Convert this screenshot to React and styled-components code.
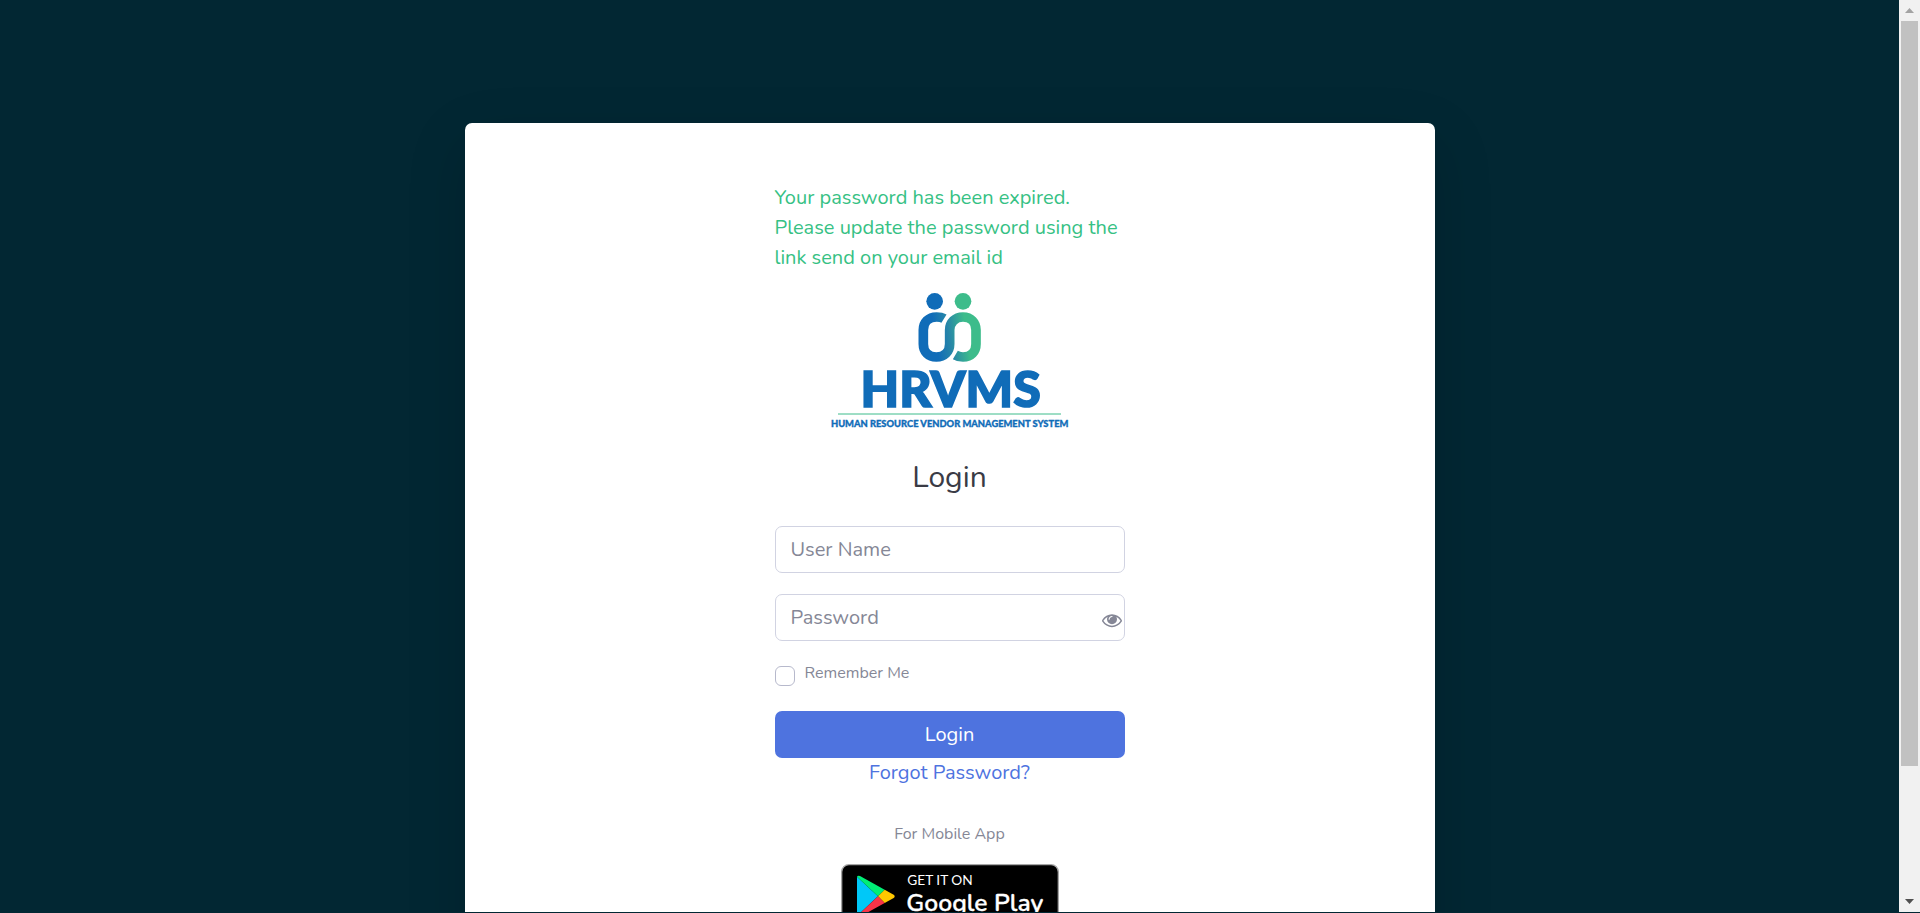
import React, { useState } from "react";
import styled, { createGlobalStyle } from "styled-components";

const GlobalStyle = createGlobalStyle`
  *, *::before, *::after { box-sizing: border-box; }
  body {
    margin: 0;
    background: #022733;
    color: #858796;
    font-family: Nunito, Lato, "Liberation Sans", sans-serif;
    font-size: 20px;
    line-height: 30px;
  }
`;

const Screen = styled.div`
  display: flex;
  height: 100vh;
  padding-bottom: 1px;
  overflow: hidden;
  background: #022733;
`;

const Page = styled.main`
  flex: 1;
  min-width: 0;
  padding: 123px 20px 0;
  overflow: hidden;
`;

const Card = styled.section`
  max-width: 970px;
  margin: 0 auto;
  padding: 60px 20px;
  border-radius: 7px;
  background: #fff;
  box-shadow: 0 20px 60px rgba(0, 0, 0, 0.15);
`;

const Form = styled.form`
  display: flex;
  flex-direction: column;
  max-width: 350px;
  margin: 0 auto;
`;

const Notice = styled.p`
  margin: 0 0 17px;
  color: #36c184;
`;

const Logo = styled.svg`
  align-self: center;
  width: 236px;
  height: 140px;
  overflow: visible;
`;

const Title = styled.h1`
  margin: 28px 0;
  color: #3a3b45;
  font-size: 30px;
  font-weight: 400;
  line-height: 40px;
  text-align: center;
`;

const Field = styled.div`
  position: relative;
  margin-bottom: 21px;
`;

const TextInput = styled.input`
  display: block;
  width: 100%;
  height: 47px;
  padding: 0 15px;
  border: 1px solid #d1d3e2;
  border-radius: 7px;
  outline: 0;
  background: #fff;
  color: #6e707e;
  font: inherit;
  &::placeholder { color: #858796; opacity: 1; }
`;

const RevealButton = styled.button`
  position: absolute;
  top: 16px;
  right: 3px;
  display: flex;
  padding: 0;
  border: 0;
  background: none;
  color: #858796;
  cursor: pointer;
`;

const Remember = styled.label`
  display: flex;
  align-items: flex-end;
  gap: 10px;
  height: 24px;
  margin-bottom: 25px;
  font-size: 16px;
  line-height: 26px;
`;

const Checkbox = styled.input`
  flex: none;
  appearance: none;
  width: 20px;
  height: 20px;
  margin: 0;
  border: 1px solid #b7b9cc;
  border-radius: 6px;
  background: #fff;
  &:checked { background: #4e73df; border-color: #4e73df; }
`;

const SubmitButton = styled.button`
  height: 47px;
  padding: 0;
  border: 0;
  border-radius: 7px;
  background: #4e73df;
  color: #fff;
  font: inherit;
  cursor: pointer;
`;

const ForgotLink = styled.a`
  align-self: center;
  color: #4e73df;
  text-decoration: none;
`;

const MobileNote = styled.p`
  margin: 31px 0 15px;
  font-size: 16px;
  text-align: center;
`;

const StoreLink = styled.a`
  display: flex;
  align-self: center;
`;

const ScrollTrack = styled.div`
  display: flex;
  flex: none;
  flex-direction: column;
  align-items: center;
  width: 21px;
  background: #f1f1f1;
`;

const ScrollArrow = styled.div`
  display: flex;
  flex: none;
  align-items: center;
  justify-content: center;
  height: 21px;
  color: ${(p) => p.$color};
`;

const ScrollRun = styled.div`
  flex: 1;
  width: 17px;
`;

const ScrollThumb = styled.div`
  height: 85.6%;
  background: #c1c1c1;
`;

function BrandLogo() {
  return (
    <Logo viewBox="96 30 708 420" role="img" aria-label="HRVMS">
      <defs>
        <linearGradient id="ring" gradientUnits="userSpaceOnUse" x1="355" y1="190" x2="543" y2="160">
          <stop offset="0.28" stopColor="#106cb8" />
          <stop offset="0.5" stopColor="#2786a8" />
          <stop offset="0.78" stopColor="#3dbc8b" />
        </linearGradient>
      </defs>
      <circle cx="404" cy="64" r="25" fill="#106cb8" />
      <circle cx="489" cy="64" r="25" fill="#3dbc8b" />
      <path
        d="M432 116Q424 111 410 111C385 111 370 128 370 150V192C370 215 385 231 409 231C433 231 449 215 449 192V150C449 128 465 111 489 111C513 111 528 128 528 150V192C528 215 513 231 489 231Q476 231 466 225"
        fill="none"
        stroke="url(#ring)"
        strokeWidth="29"
      />
      <text x="452" y="382" textAnchor="middle" fontFamily="Lato, sans-serif" fontWeight="900" fontSize="150" fill="#106cb8" stroke="#106cb8" strokeWidth="5">HRVMS</text>
      <path d="M114 402H783" stroke="#3dbc8b" strokeWidth="3" />
      <text x="449" y="440" textAnchor="middle" fontFamily="Lato, sans-serif" fontWeight="900" fontSize="28" fill="#106cb8" stroke="#106cb8" strokeWidth="1">HUMAN RESOURCE VENDOR MANAGEMENT SYSTEM</text>
    </Logo>
  );
}

function EyeIcon() {
  return (
    <svg width="20" height="20" viewBox="0 0 1792 1792" fill="currentColor" aria-hidden="true">
      <path d="M1664 960q-152-236-381-353 61 104 61 225 0 185-131.5 316.5t-316.5 131.5-316.5-131.5-131.5-316.5q0-121 61-225-229 117-381 353 133 205 333.5 326.5t434.5 121.5 434.5-121.5 333.5-326.5zm-720-384q0-20-14-34t-34-14q-125 0-214.5 89.5t-89.5 214.5q0 20 14 34t34 14 34-14 14-34q0-86 61-147t147-61q20 0 34-14t14-34zm848 384q0 34-20 69-140 230-376.5 368.5t-499.5 138.5-499.5-139-376.5-368q-20-35-20-69t20-69q140-229 376.5-368t499.5-139 499.5 139 376.5 368q20 35 20 69z" />
    </svg>
  );
}

function PlayBadge() {
  return (
    <svg width="218" height="65" viewBox="0 0 654 195" aria-hidden="true">
      <rect x="2" y="2" width="650" height="191" rx="22" fill="#000" stroke="#a6a6a6" strokeWidth="4" />
      <path d="M48 38V156L111 97Z" fill="#00c8f8" />
      <path d="M48 38Q50 33 57 36L131 77L111 97Z" fill="#00ee76" />
      <path d="M131 77L158 92Q164 97 158 102L131 117L111 97Z" fill="#ffc800" />
      <path d="M48 156Q50 161 57 158L131 117L111 97Z" fill="#f73448" />
      <text x="199" y="64" fontFamily="Lato, sans-serif" fontSize="41" fill="#fff">GET IT ON</text>
      <text x="196" y="141" fontFamily="Nunito, Lato, sans-serif" fontWeight="600" fontSize="74" fill="#fff" stroke="#fff" strokeWidth="1">Google Play</text>
    </svg>
  );
}

export default function App() {
  const [shown, setShown] = useState(false);
  return (
    <>
      <GlobalStyle />
      <Screen>
        <Page>
          <Card>
            <Form onSubmit={(e) => e.preventDefault()}>
              <Notice>Your password has been expired. Please update the password using the link send on your email id</Notice>
              <BrandLogo />
              <Title>Login</Title>
              <Field>
                <TextInput type="text" placeholder="User Name" aria-label="User Name" />
              </Field>
              <Field>
                <TextInput type={shown ? "text" : "password"} placeholder="Password" aria-label="Password" />
                <RevealButton type="button" aria-label="Show password" onClick={() => setShown(!shown)}>
                  <EyeIcon />
                </RevealButton>
              </Field>
              <Remember>
                <Checkbox type="checkbox" />
                Remember Me
              </Remember>
              <SubmitButton type="submit">Login</SubmitButton>
              <ForgotLink href="#forgot">Forgot Password?</ForgotLink>
              <MobileNote>For Mobile App</MobileNote>
              <StoreLink href="#play" aria-label="Get it on Google Play">
                <PlayBadge />
              </StoreLink>
            </Form>
          </Card>
        </Page>
        <ScrollTrack aria-hidden="true">
          <ScrollArrow $color="#a3a3a3">
            <svg width="9" height="5" viewBox="0 0 9 5"><path d="M0 5L4.5 0L9 5Z" fill="currentColor" /></svg>
          </ScrollArrow>
          <ScrollRun>
            <ScrollThumb />
          </ScrollRun>
          <ScrollArrow $color="#505050">
            <svg width="9" height="5" viewBox="0 0 9 5"><path d="M0 0L4.5 5L9 0Z" fill="currentColor" /></svg>
          </ScrollArrow>
        </ScrollTrack>
      </Screen>
    </>
  );
}
